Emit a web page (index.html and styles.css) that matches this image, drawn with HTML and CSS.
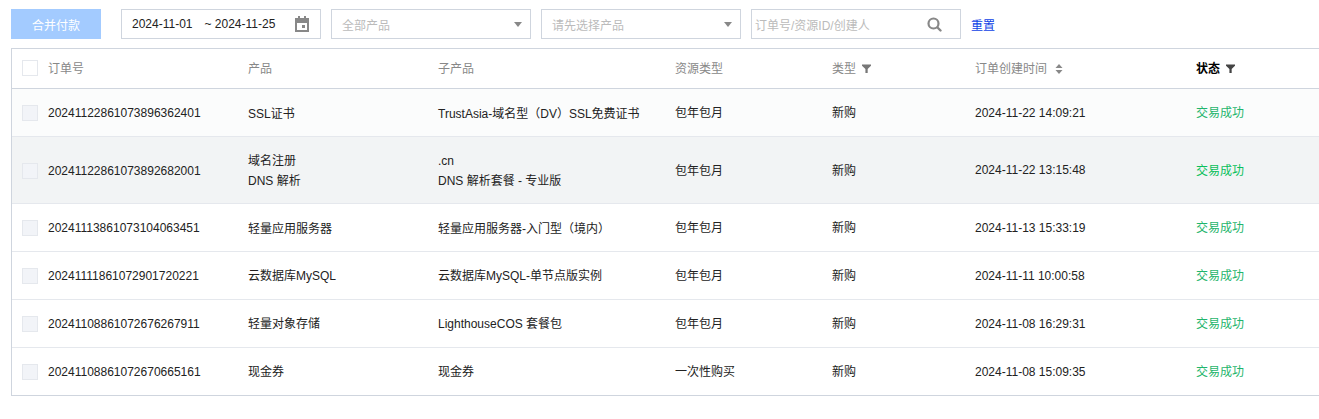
FILE: index.html
```html
<!DOCTYPE html>
<html lang="zh-CN">
<head>
<meta charset="utf-8">
<title>订单列表</title>
<link rel="stylesheet" href="styles.css">
</head>
<body>
<div class="toolbar">
  <button class="btn-merge" type="button">合并付款</button>
  <div class="field date">
    <span class="date-text"><span>2024-11-01</span><span class="tilde">~ 2024-11-25</span></span>
    <svg class="cal" width="14" height="16" viewBox="0 0 14 16"><path fill="#888" fill-rule="evenodd" d="M3 0h2v2h4V0h2v2h3v14H0V2h3V0zM2 7v7h10V7H2zm5 2h3v3H7V9z"/></svg>
  </div>
  <div class="field select"><span class="ph">全部产品</span><i class="caret"></i></div>
  <div class="field select"><span class="ph">请先选择产品</span><i class="caret"></i></div>
  <div class="field search"><span class="ph">订单号/资源ID/创建人</span>
    <svg class="mag" width="15" height="15" viewBox="0 0 15 15"><circle cx="6.500" cy="6.500" r="5" fill="none" stroke="#888" stroke-width="2.200"/><path d="M10.500 10.500l3 3" stroke="#888" stroke-width="2.400" stroke-linecap="round"/></svg>
  </div>
  <a class="reset" href="#">重置</a>
</div>
<div class="table-wrap">
<table class="orders">
  <colgroup><col class="c1"><col class="c2"><col class="c3"><col class="c4"><col class="c5"><col class="c6"><col class="c7"></colgroup>
  <thead>
    <tr>
      <th><span class="idcell"><i class="check head"></i>订单号</span></th>
      <th>产品</th>
      <th>子产品</th>
      <th>资源类型</th>
      <th>类型<svg class="filter" width="9" height="9" viewBox="0 0 10 10"><path fill="#777" d="M0 .5h10v1.500L6.300 5.500V10H3.800V5.500L0 2z"/></svg></th>
      <th>订单创建时间<svg class="sort" width="8" height="10" viewBox="0 0 8 10"><path fill="#888" d="M4 0l3.500 4H.5zM4 10L.5 6h7z"/></svg></th>
      <th class="active">状态<svg class="filter" width="9" height="9" viewBox="0 0 10 10"><path fill="#444" d="M0 .5h10v1.500L6.300 5.500V10H3.800V5.500L0 2z"/></svg></th>
    </tr>
  </thead>
  <tbody>
    <tr class="light">
      <td><span class="idcell"><i class="check"></i>20241122861073896362401</span></td>
      <td>SSL证书</td><td>TrustAsia-域名型（DV）SSL免费证书</td><td class="up">包年包月</td><td class="up">新购</td><td>2024-11-22 14:09:21</td><td class="up ok">交易成功</td>
    </tr>
    <tr class="hover">
      <td><span class="idcell"><i class="check"></i>20241122861073892682001</span></td>
      <td class="lines"><div class="line">域名注册</div><div class="line">DNS 解析</div></td>
      <td class="lines"><div class="line">.cn</div><div class="line">DNS 解析套餐 - 专业版</div></td>
      <td class="up">包年包月</td><td class="up">新购</td><td>2024-11-22 13:15:48</td><td class="up ok bright">交易成功</td>
    </tr>
    <tr>
      <td><span class="idcell"><i class="check"></i>20241113861073104063451</span></td>
      <td>轻量应用服务器</td><td>轻量应用服务器-入门型（境内）</td><td class="up">包年包月</td><td class="up">新购</td><td>2024-11-13 15:33:19</td><td class="up ok">交易成功</td>
    </tr>
    <tr>
      <td><span class="idcell"><i class="check"></i>20241111861072901720221</span></td>
      <td class="up">云数据库MySQL</td><td class="up">云数据库MySQL-单节点版实例</td><td class="up">包年包月</td><td class="up">新购</td><td>2024-11-11 10:00:58</td><td class="up ok">交易成功</td>
    </tr>
    <tr>
      <td><span class="idcell"><i class="check"></i>20241108861072676267911</span></td>
      <td class="up">轻量对象存储</td><td class="up">LighthouseCOS 套餐包</td><td class="up">包年包月</td><td class="up">新购</td><td>2024-11-08 16:29:31</td><td class="up ok">交易成功</td>
    </tr>
    <tr class="last">
      <td><span class="idcell"><i class="check"></i>20241108861072670665161</span></td>
      <td class="up">现金券</td><td class="up">现金券</td><td class="up">一次性购买</td><td class="up">新购</td><td>2024-11-08 15:09:35</td><td class="up ok">交易成功</td>
    </tr>
  </tbody>
</table>
</div>
</body>
</html>
```
FILE: styles.css
```css
html, body { margin: 0; padding: 0; background: #fff; overflow: hidden; }
body {
  font-family: "Liberation Sans", "Noto Sans CJK SC", sans-serif;
  font-size: 12px;
  color: #222;
  height: 419px;
}
.toolbar {
  display: flex;
  align-items: center;
  gap: 10px;
  padding: 9px 0 0 11px;
  height: 30px;
}
.btn-merge {
  width: 90px;
  height: 30px;
  margin-right: 10px;
  border: 0;
  padding: 0;
  background: #a3cbff;
  color: #fff;
  font: inherit;
}
.field {
  box-sizing: border-box;
  height: 30px;
  border: 1px solid #cfd5de;
  display: flex;
  align-items: center;
  justify-content: space-between;
  background: #fff;
}
.date { width: 200px; padding: 0 11px 0 10px; }
.date-text { display: flex; gap: 12px; color: #222; }
.select { width: 200px; padding: 0 8px 0 10px; }
.search { width: 210px; padding: 0 18px 0 3px; }
.ph { color: #bbb; }
.caret {
  width: 0;
  height: 0;
  border-left: 4px solid transparent;
  border-right: 4px solid transparent;
  border-top: 5px solid #888;
}
.reset { color: #0f42e6; text-decoration: none; }
.table-wrap {
  box-sizing: border-box;
  width: 1308px;
  margin: 9px 0 0 11px;
  border: 1px solid #cfd5de;
  border-right: 0;
}
.orders { border-collapse: collapse; table-layout: fixed; width: 100%; }
.c1 { width: 226px; }
.c2 { width: 190px; }
.c3 { width: 237px; }
.c4 { width: 157px; }
.c5 { width: 143px; }
.c6 { width: 221px; }
th, td { padding: 0 10px; text-align: left; white-space: nowrap; }
th {
  height: 37px;
  padding-bottom: 2px;
  font-weight: 400;
  color: #888;
  border-bottom: 1px solid #cfd5de;
}
td { border-bottom: 1px solid #e5e8ed; }
td:first-child { height: 47px; }
td.up { padding-bottom: 2px; }
td.lines { padding-top: 2px; }
.last td { border-bottom: 0; }
.light { background: #fbfcfc; }
.hover { background: #f2f4f5; }
.hover td:first-child { height: 64px; padding-top: 2px; }
.line { line-height: 20px; }
.idcell { display: flex; align-items: center; gap: 10px; }
.check {
  box-sizing: border-box;
  width: 16px;
  height: 16px;
  border: 1px solid #e5e8ed;
  background: #f2f4f8;
  display: block;
}
.check.head { background: #fff; }
.filter { margin-left: 6px; vertical-align: 0; }
.sort { margin-left: 8px; vertical-align: -1px; }
th.active { color: #000; font-weight: 700; }
.ok { color: #1fb56c; }
.ok.bright { color: #0abf5b; }
```
